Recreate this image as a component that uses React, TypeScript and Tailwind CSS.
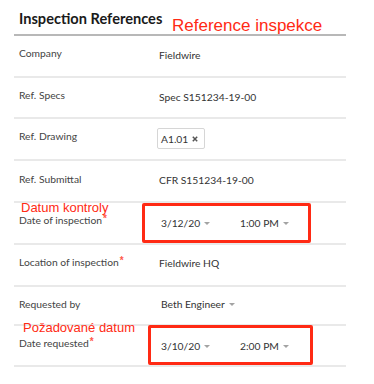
import React from "react";

function Caret() {
  return (
    <svg width="6" height="3" viewBox="0 0 6 3" className="ml-[4px] inline-block">
      <path d="M0 0 L6 0 L3 3 Z" fill="#a3a3a3" />
    </svg>
  );
}

function Req() {
  return (
    <span className="relative top-[-2px] ml-[1px] font-['Liberation_Sans',Arial,sans-serif] text-[10px] font-bold leading-[8px] text-[#ff5a4a]">
      *
    </span>
  );
}

function Row({
  h,
  lp = "pt-[11px]",
  label,
  children,
  extra,
}: {
  h: string;
  lp?: string;
  label: React.ReactNode;
  children?: React.ReactNode;
  extra?: React.ReactNode;
}) {
  return (
    <div className={`relative flex border-b-2 border-[#e9e9e9] ${h}`}>
      <div className={`w-[145px] shrink-0 pl-[5px] text-[10.3px] leading-[12px] text-[#444] ${lp}`}>
        {label}
      </div>
      <div className="flex-1 text-[10.3px] leading-[12px] text-[#333]">{children}</div>
      {extra}
    </div>
  );
}

function DateTime({ date, time }: { date: string; time: string }) {
  return (
    <div className="flex pt-[14px] text-[10.3px] leading-[12px] text-[#333]">
      <div className="ml-[2px] flex w-[79px] items-center">
        {date}
        <Caret />
      </div>
      <div className="flex items-center">
        {time}
        <Caret />
      </div>
    </div>
  );
}

export default function App() {
  return (
    <div className="h-[384px] w-[374px] bg-white font-['Lato','Noto_Sans',sans-serif]">
      <div className="ml-[14px] w-[332px]">
        <div className="relative h-[36px] border-b-2 border-[#b8b8b8]">
          <div className="pl-[5px] pt-[10px] text-[14.6px] font-bold leading-[18px] text-[#1a1a1a]">
            Inspection References
          </div>
          <div className="absolute left-[158px] top-[16px] font-['Liberation_Sans',Arial,sans-serif] text-[17px] leading-[19px] text-[#ff2a14]">
            Reference inspekce
          </div>
        </div>

        <Row h="h-[42px]" label="Company">
          <div className="pt-[13px]">Fieldwire</div>
        </Row>
        <Row h="h-[41px]" label="Ref. Specs">
          <div className="pt-[13px]">Spec S151234-19-00</div>
        </Row>
        <Row h="h-[42px]" label="Ref. Drawing">
          <div className="pt-[9px]">
            <span className="ml-[-2px] inline-flex h-[21px] items-center rounded-[2px] border border-[#d6d6d6] pl-[3px] pr-[6px] text-[#333]">
              A1.01
              <svg width="6" height="6" viewBox="0 0 6 6" className="ml-[4px] mt-[1px]">
                <path d="M0.8 0.8 L5.2 5.2 M5.2 0.8 L0.8 5.2" stroke="#555" strokeWidth="1.5" />
              </svg>
            </span>
          </div>
        </Row>
        <Row h="h-[42px]" lp="pt-[12px]" label="Ref. Submittal">
          <div className="pt-[13px]">CFR S151234-19-00</div>
        </Row>
        <Row
          h="h-[42px]"
          label={
            <span className="relative">
              <span className="absolute left-[2px] top-[-12px] whitespace-nowrap font-['Liberation_Sans',Arial,sans-serif] text-[13px] leading-[11px] text-[#ff2a14]">
                Datum kontroly
              </span>
              Date of inspection
              <Req />
            </span>
          }
          extra={
            <div className="absolute left-[128px] top-0 h-[40px] w-[169px] rounded-[2px] border-[3px] border-[#ff2a14]" />
          }
        >
          <DateTime date="3/12/20" time="1:00 PM" />
        </Row>
        <Row
          h="h-[42px]"
          label={
            <span>
              Location of inspection
              <Req />
            </span>
          }
        >
          <div className="pt-[12px]">Fieldwire HQ</div>
        </Row>
        <Row h="h-[39px]" label="Requested by">
          <div className="ml-[2px] flex items-center pt-[11px]">
            Beth Engineer
            <Caret />
          </div>
        </Row>
        <Row
          h="h-[41px]"
          label={
            <span className="relative">
              <span className="absolute left-[4px] top-[-15px] whitespace-nowrap font-['Liberation_Sans',Arial,sans-serif] text-[13px] leading-[11px] text-[#ff2a14]">
                Požadované datum
              </span>
              Date requested
              <Req />
            </span>
          }
          extra={
            <div className="absolute left-[134px] top-[-1px] h-[40px] w-[165px] rounded-[2px] border-[3px] border-[#ff2a14]" />
          }
        >
          <DateTime date="3/10/20" time="2:00 PM" />
        </Row>
      </div>
    </div>
  );
}
